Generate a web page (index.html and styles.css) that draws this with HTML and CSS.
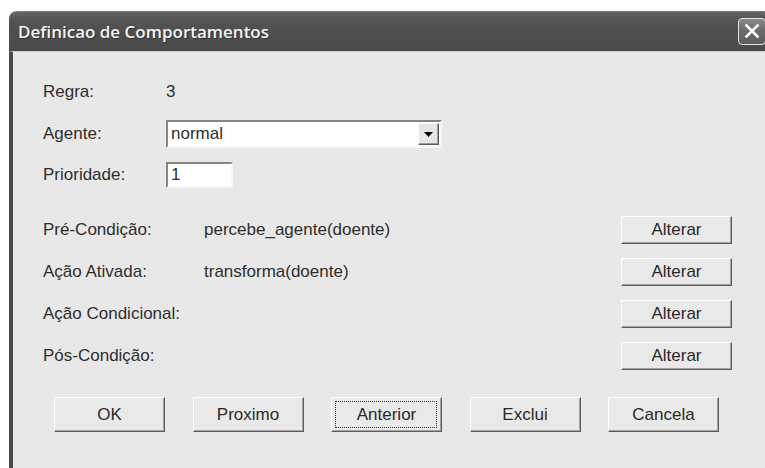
FILE: index.html
```html
<!DOCTYPE html>
<html lang="pt">
<head>
<meta charset="utf-8">
<title>Definicao de Comportamentos</title>
<link rel="stylesheet" href="styles.css">
</head>
<body>
<div class="window">
  <div class="titlebar">
    <span class="title">Definicao de Comportamentos</span>
    <button class="close" aria-label="Fechar">
      <svg viewBox="0 0 20 20" width="20" height="20"><path d="M4.5 4.5 L15.5 15.5 M15.5 4.5 L4.5 15.5" stroke="#fff" stroke-width="2.6" stroke-linecap="square" fill="none"/></svg>
    </button>
  </div>
  <div class="client">
    <div class="fields">
      <div class="field"><span class="label">Regra:</span><span class="value">3</span></div>
      <div class="field">
        <span class="label">Agente:</span>
        <div class="combo">
          <span class="combo-text">normal</span>
          <span class="combo-btn"><svg viewBox="0 0 9 5" width="9" height="5"><polygon points="0,0 9,0 4.5,5" fill="#000"/></svg></span>
        </div>
      </div>
      <div class="field field-small">
        <span class="label">Prioridade:</span>
        <div class="textbox">1</div>
      </div>
    </div>

    <div class="actions">
      <div class="action"><span class="label">Pré-Condição:</span><span class="value">percebe_agente(doente)</span><button class="btn">Alterar</button></div>
      <div class="action"><span class="label">Ação Ativada:</span><span class="value">transforma(doente)</span><button class="btn">Alterar</button></div>
      <div class="action"><span class="label">Ação Condicional:</span><span class="value"></span><button class="btn">Alterar</button></div>
      <div class="action"><span class="label">Pós-Condição:</span><span class="value"></span><button class="btn">Alterar</button></div>
    </div>

    <div class="footer">
      <button class="btn btn-lg">OK</button>
      <button class="btn btn-lg">Proximo</button>
      <button class="btn btn-lg focused">Anterior</button>
      <button class="btn btn-lg">Exclui</button>
      <button class="btn btn-lg">Cancela</button>
    </div>
  </div>
</div>
</body>
</html>
```

FILE: styles.css
```css
html, body {
  margin: 0;
  padding: 0;
  background: #ffffff;
  overflow: hidden;
}

body {
  font-family: "Liberation Sans", Arial, sans-serif;
  font-size: 17px;
  color: #2e2e2e;
}

.window {
  margin: 11px 0 0 9px;
  width: 762px;
  height: 457px;
  display: flex;
  flex-direction: column;
}

/* dark title bar with rounded top corners */
.titlebar {
  flex: none;
  height: 40px;
  box-sizing: border-box;
  padding-left: 9px;
  border-radius: 8px 8px 0 0;
  background: linear-gradient(to bottom, #7c7c7c 0, #626262 2px, #555555 8px, #4f4f4f 50%, #4a4a4a 100%);
  display: flex;
  align-items: center;
  justify-content: space-between;
}

.title {
  font-family: "Open Sans", "DejaVu Sans", sans-serif;
  font-weight: 600;
  font-size: 17px;
  color: #f4f4f4;
  text-shadow: 1px 1px 0 #333;
  margin-top: 1px;
}

.close {
  width: 28px;
  height: 27px;
  margin-right: 5px;
  padding: 0;
  box-sizing: border-box;
  border: 1px solid #e2e2e2;
  border-radius: 4px;
  background: linear-gradient(to bottom, #8a8a8a, #6a6a6a 50%, #5e5e5e);
  display: flex;
  align-items: center;
  justify-content: center;
}

/* dialog body */
.client {
  flex: 1;
  background: #e8e8e8;
  border-left: 4px solid #4c4c4c;
  border-top: 1px solid #cfcfcf;
  padding: 26px 0 0 30px;
  display: flex;
  flex-direction: column;
}

.fields {
  display: flex;
  flex-direction: column;
  gap: 14px;
}

.field {
  height: 28px;
  display: flex;
  align-items: center;
}

.field-small {
  height: 26px;
}

.fields .label {
  width: 123px;
  flex: none;
}

.combo {
  width: 276px;
  height: 28px;
  box-sizing: border-box;
  background: #ffffff;
  border: 2px solid;
  border-color: #858585 #f6f6f6 #f6f6f6 #858585;
  display: flex;
  align-items: center;
  justify-content: space-between;
}

.combo-text {
  padding-left: 3px;
}

.combo-btn {
  width: 21px;
  height: 22px;
  margin-right: 1px;
  box-sizing: border-box;
  background: #e6e6e6;
  border: 1px solid;
  border-color: #ffffff #5a5a5a #5a5a5a #ffffff;
  box-shadow: inset -1px -1px 0 #9c9c9c;
  display: flex;
  align-items: center;
  justify-content: center;
}

.textbox {
  width: 67px;
  height: 26px;
  box-sizing: border-box;
  background: #ffffff;
  border: 2px solid;
  border-color: #858585 #f6f6f6 #f6f6f6 #858585;
  padding-left: 3px;
  display: flex;
  align-items: center;
}

.actions {
  margin-top: 28px;
  width: 689px;
  display: flex;
  flex-direction: column;
  gap: 14px;
}

.action {
  height: 28px;
  display: flex;
  align-items: center;
}

.action .label {
  width: 161px;
  flex: none;
}

.action .value {
  flex: 1;
}

/* raised push buttons */
.btn {
  font-family: "Liberation Sans", Arial, sans-serif;
  font-size: 17px;
  color: #2a2a2a;
  width: 111px;
  height: 28px;
  padding: 0;
  box-sizing: border-box;
  background: #e9e9e9;
  border: 1px solid;
  border-color: #ffffff #5c5c5c #5c5c5c #ffffff;
  box-shadow: inset -1px -1px 0 #a2a2a2;
  position: relative;
}

.btn-lg {
  height: 35px;
}

.btn.focused::after {
  content: "";
  position: absolute;
  inset: 3px 4px 3px 3px;
  border: 1px dotted #333333;
}

.footer {
  margin-top: 27px;
  padding-left: 11px;
  display: flex;
  gap: 27.5px;
}
```
